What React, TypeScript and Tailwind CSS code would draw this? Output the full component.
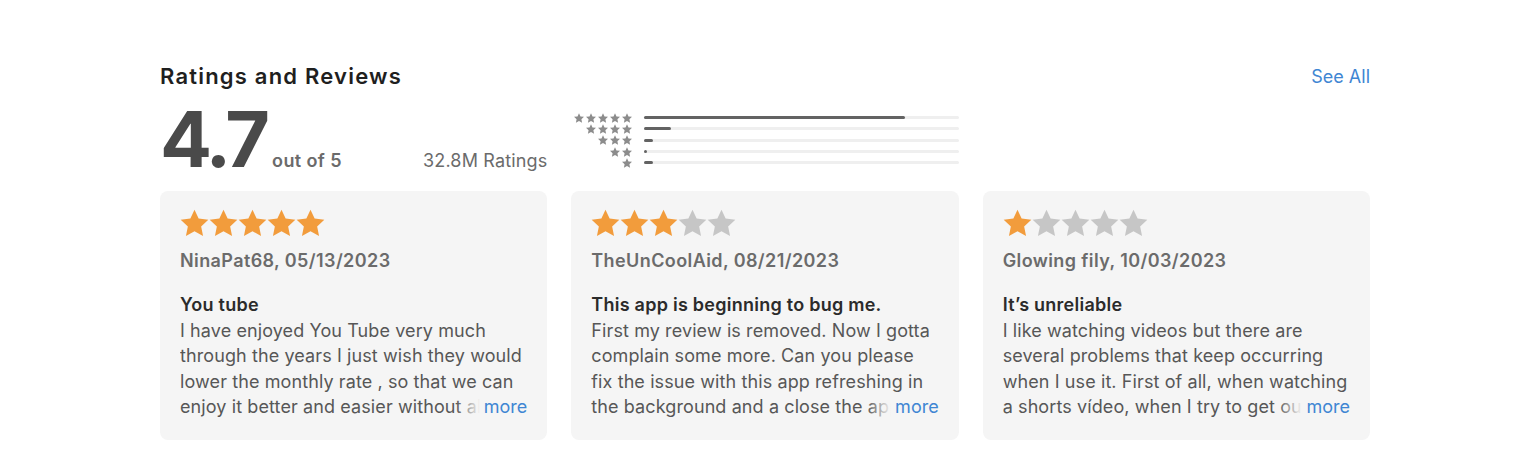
import React from "react";

const STAR =
  "M12 1.6l3.05 6.55 7.15.85-5.3 4.9 1.42 7.1L12 17.45 5.68 21l1.42-7.1L1.8 9l7.15-.85z";

function Star({ className }: { className: string }) {
  return (
    <svg viewBox="1.3 1.2 21.4 20.4" className={className} aria-hidden>
      <path d={STAR} fill="currentColor" />
    </svg>
  );
}

const dist = [
  { stars: 5, pct: 83 },
  { stars: 4, pct: 8.6 },
  { stars: 3, pct: 2.6 },
  { stars: 2, pct: 0.8 },
  { stars: 1, pct: 2.6 },
];

const reviews = [
  {
    rating: 5,
    who: "NinaPat68, 05/13/2023",
    title: "You tube",
    body: "I have enjoyed You Tube very much through the years I just wish they would lower the monthly rate , so that we can enjoy it better and easier without all the ads popping up.",
  },
  {
    rating: 3,
    who: "TheUnCoolAid, 08/21/2023",
    title: "This app is beginning to bug me.",
    body: "First my review is removed. Now I gotta complain some more. Can you please fix the issue with this app refreshing in the background and a close the app button please.",
  },
  {
    rating: 1,
    who: "Glowing fily, 10/03/2023",
    title: "It\u2019s unreliable",
    body: "I like watching videos but there are several problems that keep occurring when I use it. First of all, when watching a shorts v\u00eddeo, when I try to get out of it the app freezes.",
  },
];

function ReviewCard({ r }: { r: (typeof reviews)[number] }) {
  return (
    <div className="rounded-lg bg-[#f5f5f5] px-5 pt-[17px] pb-5">
      <div className="flex h-[29px] items-center">
        {[1, 2, 3, 4, 5].map((i) => (
          <Star
            key={i}
            className={`h-[28px] w-[29px] ${i <= r.rating ? "text-[#f29c3c]" : "text-[#c6c6c6]"}`}
          />
        ))}
      </div>
      <div className="mt-3 text-[18px] leading-6 font-semibold tracking-[0.4px] text-[#6b6b6b]">{r.who}</div>
      <div className="mt-[19px] text-[18px] leading-[25.6px] font-semibold tracking-[0.25px] text-[#2b2b2b]">
        {r.title}
      </div>
      <div className="relative h-[102.4px] overflow-hidden text-[18px] leading-[25.6px] tracking-[0.1px] text-[#575757]">
        <p>{r.body}</p>
        <span className="absolute right-0 bottom-0 bg-[linear-gradient(90deg,rgba(245,245,245,0)_0,#f5f5f5_24px)] pl-[28px] tracking-normal text-[#3f86d3]">
          more
        </span>
      </div>
    </div>
  );
}

export default function App() {
  return (
    <div className="min-h-[470px] bg-white pt-[62px] pl-[160px] font-['Inter',sans-serif]">
      <div className="w-[1210px]">
        <div className="flex items-center justify-between">
          <h2 className="text-[22px] leading-7 font-semibold tracking-[1.2px] text-[#1f1f1f]">Ratings and Reviews</h2>
          <a className="text-[18px] text-[#3f86d3]">See All</a>
        </div>

        <div className="mt-[10px] grid grid-cols-3 gap-x-6">
          <div className="flex items-baseline justify-between">
            <div className="flex items-baseline">
              <span className="text-[77px] leading-[78px] font-bold tracking-[-4px] text-[#4a4a4a]">4.7</span>
              <span className="ml-[6px] text-[18px] font-semibold tracking-[0.4px] text-[#6b6b6b]">out of 5</span>
            </div>
            <span className="text-[18px] tracking-[0.15px] text-[#6b6b6b]">32.8M Ratings</span>
          </div>

          <div className="flex flex-col pt-[12px]">
            {dist.map((d) => (
              <div key={d.stars} className="flex h-[11.3px] items-center">
                <div className="flex w-[62px] justify-end">
                  {Array.from({ length: d.stars }).map((_, i) => (
                    <Star key={i} className="h-[10px] w-[12px] text-[#8c8c8c]" />
                  ))}
                </div>
                <div className="ml-[11px] h-[3px] flex-1 rounded-full bg-[#efefef]">
                  <div
                    className="h-[3px] min-w-[2px] rounded-full bg-[#636363]"
                    style={{ width: `${d.pct}%` }}
                  />
                </div>
              </div>
            ))}
          </div>
          <div />
        </div>

        <div className="mt-[13px] grid grid-cols-3 gap-x-6">
          {reviews.map((r) => (
            <ReviewCard key={r.who} r={r} />
          ))}
        </div>
      </div>
    </div>
  );
}
